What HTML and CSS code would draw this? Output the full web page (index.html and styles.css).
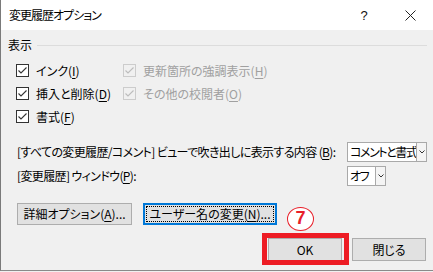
FILE: index.html
```html
<!DOCTYPE html>
<html lang="ja">
<head>
<meta charset="utf-8">
<title>変更履歴オプション</title>
<link rel="stylesheet" href="styles.css">
</head>
<body>
<div class="window">
  <div class="titlebar">
    <span class="title">変更履歴オプション</span>
    <span class="tb-btn help">?</span>
    <span class="tb-btn close"><svg width="11" height="11" viewBox="0 0 11 11"><path d="M0.5 0.5 L10.5 10.5 M10.5 0.5 L0.5 10.5" stroke="#222" stroke-width="1" fill="none"/></svg></span>
  </div>
  <div class="content">
    <div class="group-header"><span class="group-label">表示</span><span class="rule"></span></div>
    <div class="checks">
      <div class="chk"><span class="box"><svg width="11" height="11" viewBox="0 0 11 11"><polyline points="1.5,5.5 4,8 9.5,2.5" fill="none" stroke="currentColor" stroke-width="1.1"/></svg></span><span>インク(<u>I</u>)</span></div>
      <div class="chk disabled"><span class="box"><svg width="11" height="11" viewBox="0 0 11 11"><polyline points="1.5,5.5 4,8 9.5,2.5" fill="none" stroke="currentColor" stroke-width="1.1"/></svg></span><span>更新箇所の強調表示(<u>H</u>)</span></div>
      <div class="chk"><span class="box"><svg width="11" height="11" viewBox="0 0 11 11"><polyline points="1.5,5.5 4,8 9.5,2.5" fill="none" stroke="currentColor" stroke-width="1.1"/></svg></span><span>挿入と削除(<u>D</u>)</span></div>
      <div class="chk disabled"><span class="box"><svg width="11" height="11" viewBox="0 0 11 11"><polyline points="1.5,5.5 4,8 9.5,2.5" fill="none" stroke="currentColor" stroke-width="1.1"/></svg></span><span>その他の校閲者(<u>O</u>)</span></div>
      <div class="chk"><span class="box"><svg width="11" height="11" viewBox="0 0 11 11"><polyline points="1.5,5.5 4,8 9.5,2.5" fill="none" stroke="currentColor" stroke-width="1.1"/></svg></span><span>書式(<u>F</u>)</span></div>
    </div>
    <div class="fields">
      <span class="field-label">[すべての変更履歴/コメント] ビューで吹き出しに表示する内容 (<u>B</u>):</span>
      <div class="select wide"><span class="val">コメントと書式</span><span class="arrow"><svg width="6" height="4" viewBox="0 0 6 4"><polyline points="0.5,0.5 3,3 5.5,0.5" fill="none" stroke="#333" stroke-width="1"/></svg></span></div>
      <span class="field-label">[変更履歴] ウィンドウ(<u>P</u>):</span>
      <div class="select narrow"><span class="val">オフ</span><span class="arrow"><svg width="6" height="4" viewBox="0 0 6 4"><polyline points="0.5,0.5 3,3 5.5,0.5" fill="none" stroke="#333" stroke-width="1"/></svg></span></div>
    </div>
    <div class="btn-row">
      <button class="btn adv">詳細オプション(<u>A</u>)...</button>
      <button class="btn user focused">ユーザー名の変更(<u>N</u>)...</button>
    </div>
    <div class="footer">
      <button class="btn dlg">OK</button>
      <button class="btn dlg">閉じる</button>
    </div>
  </div>
  <div class="annot-circle">7</div>
  <div class="annot-rect"></div>
</div>
</body>
</html>
```

FILE: styles.css
```css
* { box-sizing: border-box; }
html, body { margin: 0; padding: 0; }
body {
  background: #f0f0f0;
  font-family: "Noto Sans CJK JP", "Noto Sans", sans-serif;
  font-size: 12px;
  color: #000;
  font-feature-settings: "palt";
}
.window {
  position: relative;
  width: 433px;
  height: 271px;
  border-left: 1px solid #7a7a7a;
  border-bottom: 1px solid #8a8a8a;
  background: #f0f0f0;
  overflow: hidden;
}
.titlebar {
  height: 30px;
  background: #fff;
  display: flex;
  align-items: center;
  padding-left: 8px;
}
.title { flex: 1; line-height: 16px; letter-spacing: -1px; }
.tb-btn {
  width: 46px;
  height: 30px;
  display: flex;
  align-items: center;
  justify-content: center;
}
.help { font-family: "Liberation Sans", sans-serif; font-size: 13px; color: #111; }
.content { padding: 7px 6px 0 0; }
.group-header {
  display: flex;
  align-items: center;
  height: 16px;
  padding-left: 7px;
  gap: 5px;
}
.group-label { line-height: 16px; }
.rule { flex: 1; height: 1px; background: #dcdcdc; }
.checks {
  margin-top: 6px;
  padding-left: 15px;
  display: grid;
  grid-template-columns: 107px auto;
  grid-auto-rows: 23px;
}
.chk { display: flex; align-items: center; gap: 7px; }
.box {
  width: 13px;
  height: 13px;
  border: 1px solid #333;
  background: #fff;
  color: #333;
  display: flex;
}
.chk.disabled { color: #a0a0a0; }
.chk.disabled .box { border-color: #cccccc; background: #f0f0f0; color: #bcbcbc; }
u { text-underline-offset: 2px; }
.fields {
  margin-top: 14px;
  padding-left: 16px;
  display: grid;
  grid-template-columns: 330px auto;
  grid-auto-rows: 20px;
  row-gap: 4px;
  align-items: center;
}
.field-label { line-height: 20px; white-space: nowrap; letter-spacing: -0.62px; }
.select {
  height: 20px;
  border: 1px solid #a9a9a9;
  background: #fff;
  display: flex;
  overflow: hidden;
}
.select.wide { width: 80px; }
.select.narrow { width: 39px; }
.val { flex: 1; padding-left: 2px; line-height: 18px; white-space: nowrap; overflow: hidden; letter-spacing: -1.4px; }
.arrow {
  flex: none;
  width: 10px;
  border-left: 1px solid #a9a9a9;
  background: #f4f4f4;
  display: flex;
  align-items: center;
  justify-content: center;
}
.btn {
  font-family: "Noto Sans CJK JP", "Noto Sans", sans-serif;
  font-size: 12px;
  font-feature-settings: "palt";
  color: #000;
  height: 22px;
  background: #e1e1e1;
  border: 1px solid #adadad;
  padding: 0;
  margin: 0;
  line-height: 18px;
}
.btn-row {
  margin-top: 17px;
  padding-left: 16px;
  display: flex;
  gap: 11px;
}
.btn.adv { width: 115px; }
.btn.user { width: 134px; }
.btn.focused {
  border: 2px solid #0078d7;
  outline: 1px dotted #000;
  outline-offset: -4px;
}
.footer {
  margin-top: 13px;
  display: flex;
  justify-content: flex-end;
  gap: 10px;
  padding-right: 1px;
}
.btn.dlg { width: 74px; height: 23px; }
.annot-circle {
  position: absolute;
  left: 286px;
  top: 207px;
  width: 27px;
  height: 24px;
  border: 1.5px solid #e8202a;
  border-radius: 50%;
  background: #fff;
  color: #e8202a;
  font-family: "Liberation Sans", sans-serif;
  font-weight: bold;
  font-size: 18px;
  line-height: 21px;
  text-align: center;
}
.annot-rect {
  position: absolute;
  left: 261px;
  top: 233px;
  width: 87px;
  height: 32px;
  border: 5px solid #ed1c24;
}
```
